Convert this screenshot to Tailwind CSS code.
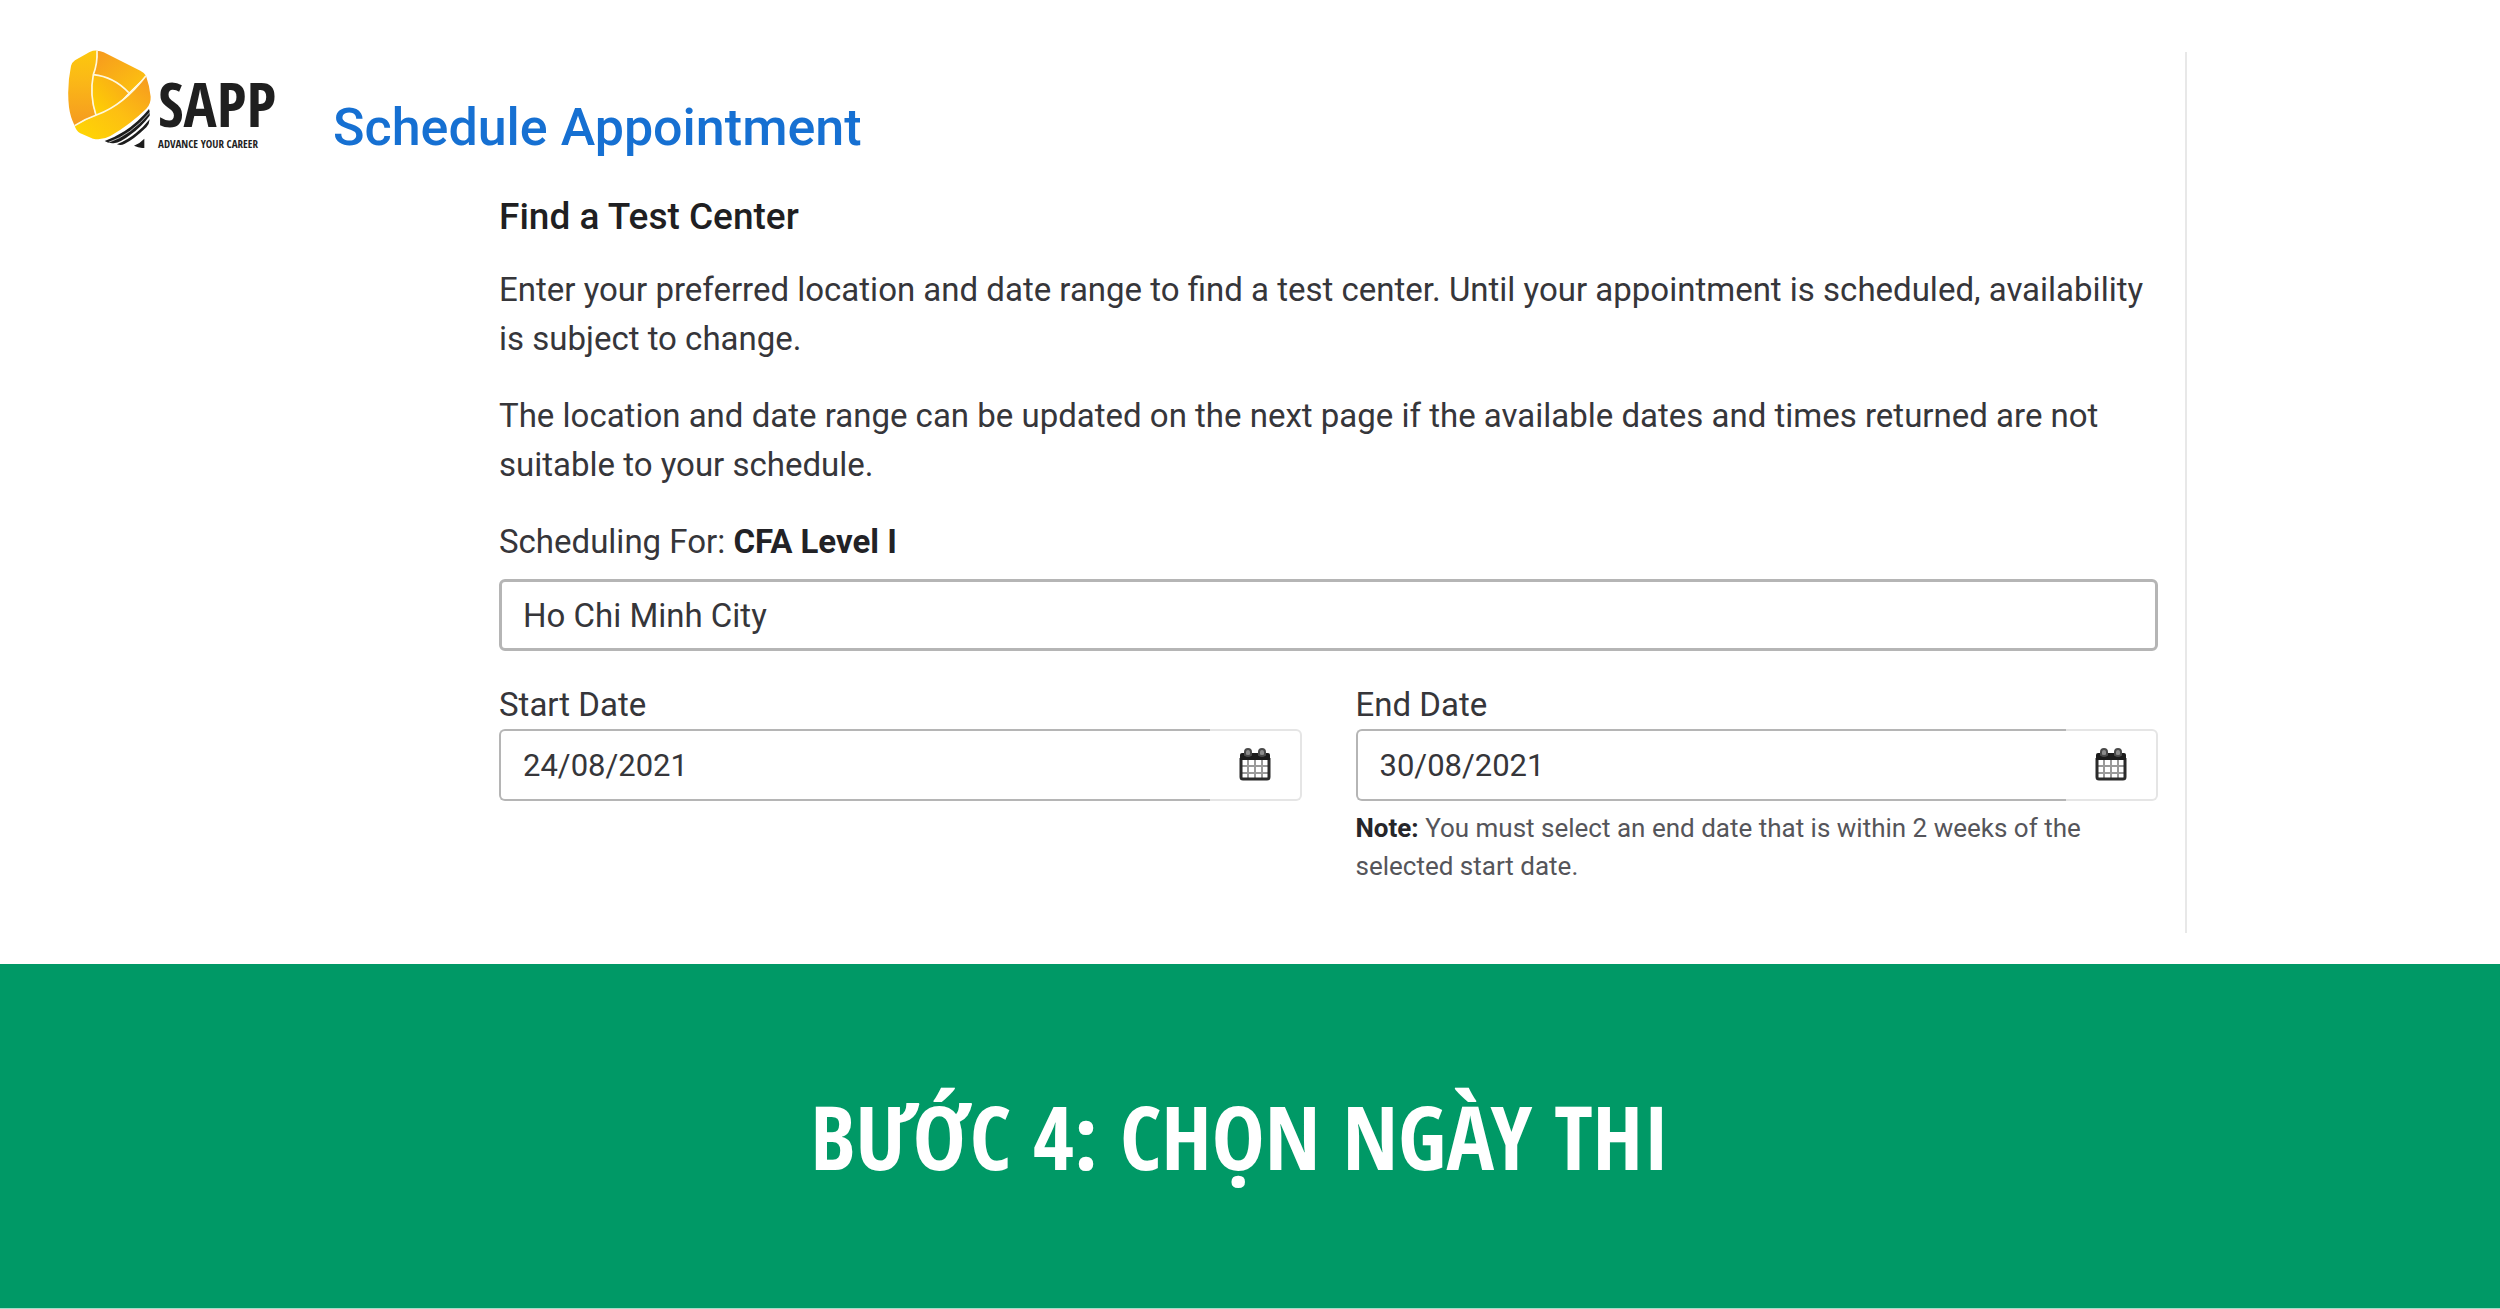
<!DOCTYPE html>
<html lang="vi">
<head>
<meta charset="utf-8">
<meta name="viewport" content="width=device-width, initial-scale=1">
<title>SAPP - Bước 4: Chọn ngày thi</title>
<script src="https://cdn.jsdelivr.net/npm/@tailwindcss/browser@4"></script>
</head>
<body class="flex min-h-screen flex-col bg-white font-[Roboto,sans-serif] text-[#36363a]">
<svg class="hidden" aria-hidden="true">
  <symbol id="calendar" viewBox="0 0 32 34">
    <path fill="none" stroke="#9a9a9a" stroke-width="2" d="M9 12v19M16 12v19M23 12v19M3 18h26M3 25h26"/>
    <path fill="none" stroke="#2b2b2b" stroke-width="3" d="M2 10v19q0 2 2 2h24q2 0 2-2V10"/>
    <path fill="#1c1c1c" d="M3 5h26q2 0 2 2v5H1V7q0-2 2-2z"/>
    <path fill="#8c8c8c" stroke="#4a4a4a" stroke-width="2" d="M6 7V4a3 3 0 0 1 6 0v3q-3 2-6 0zM20 7V4a3 3 0 0 1 6 0v3q-3 2-6 0z"/>
  </symbol>
</svg>
<main class="mb-[31px] flex pt-[52px] pr-[313px] pl-[67px]">
  <header class="-mt-0.5 w-[266px] shrink-0">
    <a href="#" class="flex gap-[7px]" aria-label="SAPP">
      <svg class="h-[98px] w-[84px] shrink-0" viewBox="80 60 252 294" aria-hidden="true">
        <defs>
          <linearGradient id="g1" x1="0" y1="0" x2="0" y2="1"><stop offset="0" stop-color="#fdc80d"/><stop offset=".4" stop-color="#fbb817"/><stop offset="1" stop-color="#f59a20"/></linearGradient>
          <linearGradient id="g2" x1="0" y1="0" x2="1" y2="1"><stop offset="0" stop-color="#f6981f"/><stop offset="1" stop-color="#fdc60e"/></linearGradient>
          <linearGradient id="g3" x1="0" y1="1" x2="1" y2="0"><stop offset="0" stop-color="#ffd802"/><stop offset=".5" stop-color="#fdbf12"/><stop offset="1" stop-color="#f6981f"/></linearGradient>
          <linearGradient id="g4" x1="0" y1="1" x2="1" y2="0"><stop offset="0" stop-color="#ffd400"/><stop offset="1" stop-color="#f8a41c"/></linearGradient>
        </defs>
        <path fill="url(#g1)" d="M170 62Q160 61 148 66L104 91Q95 97 92 108Q79 170 86 232Q90 262 103 287Q130 268 166 256Q147 197 159 134Q171 98 170 62Z"/>
        <path fill="url(#g2)" d="M170 62Q180 62 190 67L300 122Q312 128 317 137L265 188Q220 140 159 134Q173 98 170 62Z"/>
        <path fill="url(#g4)" d="M159 134Q220 140 265 188Q225 236 166 256Q148 197 159 134Z"/>
        <path fill="url(#g3)" d="M317 137Q327 165 331 200Q332 222 318 236Q270 283 210 318Q185 332 158 326L120 310Q107 302 103 287Q135 268 172 254Q255 220 317 137Z"/>
        <path fill="none" stroke="#fff8dc" stroke-width="5" d="M170 62Q172 100 159 134Q147 195 167 256M159 134Q220 140 265 188M103 287Q135 266 170 254Q250 225 317 137"/>
        <path fill="#1c1c1c" d="M326 237Q329 243 328 257Q306 288 268 316Q242 337 220 340Q204 341 193 333Q222 323 252 304Q293 277 326 237ZM328 268Q327 283 318 292Q280 329 252 342Q241 348 230 343Q262 330 286 310Q309 292 328 268ZM312 326V354Q297 355 281 347Q299 340 312 326Z"/>
        <path fill="none" stroke="#fff" stroke-width="2" d="M205 337Q270 316 330 246"/>
      </svg>
      <span class="flex flex-col pt-[18px] font-['Open_Sans_Condensed','Open_Sans',sans-serif] font-bold text-[#1f1f1f]">
        <span class="text-[62px] leading-[70px]">SAPP</span>
        <span class="text-[11px] leading-3 whitespace-nowrap">ADVANCE YOUR CAREER</span>
      </span>
    </a>
  </header>
  <section class="min-w-0 flex-1 border-r-2 border-[#e8e8e8] pt-[46px] pb-12">
    <h1 class="text-[52px] leading-[60px] font-medium text-[#1670d2]">Schedule Appointment</h1>
    <form class="mt-[37px] pr-[27px] pl-[166px] text-[33px] leading-[49px]">
      <h2 class="text-[37px] leading-[44px] font-medium text-[#1f1f22]">Find a Test Center</h2>
      <p class="mt-[26px]">Enter your preferred location and date range to find a test center. Until your appointment is scheduled, availability is subject to change.</p>
      <p class="mt-7">The location and date range can be updated on the next page if the available dates and times returned are not suitable to your schedule.</p>
      <label for="city" class="mt-7 block">Scheduling For: <strong class="font-bold text-[#222226]">CFA Level I</strong></label>
      <input id="city" type="text" value="Ho Chi Minh City" class="mt-[13px] block h-[72px] w-full rounded-md border-3 border-[#b5b5b5] px-[21px]">
      <div class="mt-[34px] grid grid-cols-2 gap-[54px]">
        <div>
          <label for="start" class="block leading-[40px]">Start Date</label>
          <div class="mt-1 flex h-[72px]">
            <input id="start" type="text" value="24/08/2021" class="min-w-0 flex-1 rounded-l-md border-2 border-r-0 border-[#b5b5b5] px-[22px] text-[31px]">
            <button type="button" aria-label="Choose start date" class="flex w-[92px] items-center justify-center rounded-r-md border-2 border-l-0 border-[#e5e5e5]"><svg class="h-[34px] w-8"><use href="#calendar"/></svg></button>
          </div>
        </div>
        <div>
          <label for="end" class="block leading-[40px]">End Date</label>
          <div class="mt-1 flex h-[72px]">
            <input id="end" type="text" value="30/08/2021" aria-describedby="note" class="min-w-0 flex-1 rounded-l-md border-2 border-r-0 border-[#b5b5b5] px-[22px] text-[31px]">
            <button type="button" aria-label="Choose end date" class="flex w-[92px] items-center justify-center rounded-r-md border-2 border-l-0 border-[#e5e5e5]"><svg class="h-[34px] w-8"><use href="#calendar"/></svg></button>
          </div>
          <p id="note" class="mt-2 pr-10 text-[26px] leading-[38px] text-[#55555a]"><strong class="font-bold text-[#26262a]">Note:</strong> You must select an end date that is within 2 weeks of the selected start date.</p>
        </div>
      </div>
    </form>
  </section>
</main>
<footer class="flex flex-1 items-center justify-center border-b border-[#a6dcc9] bg-[#009966] pr-5">
  <h2 class="font-['Open_Sans_Condensed','Open_Sans',sans-serif] text-[89px] leading-[120px] font-bold text-white">BƯỚC 4: CHỌN NGÀY THI</h2>
</footer>
</body>
</html>
